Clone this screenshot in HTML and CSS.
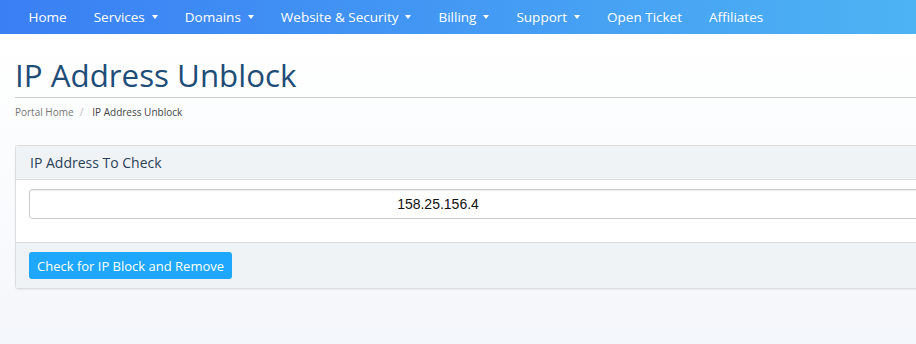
FILE: index.html
```html
<!DOCTYPE html>
<html lang="en">
<head>
    <meta charset="UTF-8">
    <meta name="viewport" content="width=device-width, initial-scale=1.0">
    <title>IP Address Unblock</title>
    <link rel="stylesheet" href="styles.css">
</head>
<body>
    <nav class="main-nav">
        <a href="#" class="nav-link">Home</a>
        <a href="#" class="nav-link">Services<span class="caret"></span></a>
        <a href="#" class="nav-link">Domains<span class="caret"></span></a>
        <a href="#" class="nav-link">Website &amp; Security<span class="caret"></span></a>
        <a href="#" class="nav-link">Billing<span class="caret"></span></a>
        <a href="#" class="nav-link">Support<span class="caret"></span></a>
        <a href="#" class="nav-link">Open Ticket</a>
        <a href="#" class="nav-link">Affiliates</a>
    </nav>

    <main class="page">
        <div class="header-lined">
            <h1>IP Address Unblock</h1>
        </div>
        <ol class="breadcrumb">
            <li><a href="#">Portal Home</a></li>
            <li class="active">IP Address Unblock</li>
        </ol>

        <div class="panel">
            <div class="panel-heading">IP Address To Check</div>
            <div class="panel-body">
                <input type="text" class="ip-input" value="158.25.156.4">
            </div>
            <div class="panel-footer">
                <button class="check-btn">Check for IP Block and Remove</button>
            </div>
        </div>
    </main>
</body>
</html>
```

FILE: styles.css
```css
body {
    margin: 0;
    font-family: "Open Sans", sans-serif;
    background: linear-gradient(to bottom, #ffffff 40px, #f4f7fb 344px);
    min-height: 100vh;
    overflow: hidden;
}
.main-nav {
    display: flex;
    align-items: center;
    height: 34px;
    padding-left: 15px;
    background: linear-gradient(to right, #3a7ff4, #4db3f3);
}
.nav-link {
    display: flex;
    align-items: center;
    padding: 0 13.5px;
    color: #fff;
    font-size: 13.5px;
    text-decoration: none;
    white-space: nowrap;
}
.caret {
    width: 0;
    height: 0;
    margin-left: 7px;
    border-left: 3.5px solid transparent;
    border-right: 3.5px solid transparent;
    border-top: 4px solid #fff;
}
.page {
    padding: 0 0 0 15px;
    width: 1100px;
}
.header-lined {
    border-bottom: 1px solid #cccccc;
    padding: 23px 0 4px;
}
.header-lined h1 {
    margin: 0;
    font-size: 31.3px;
    font-weight: 400;
    line-height: 36px;
    color: #1e4d78;
}
.breadcrumb {
    display: flex;
    list-style: none;
    margin: 0;
    padding: 6px 0 0;
    font-size: 10px;
    line-height: 16px;
}
.breadcrumb a {
    color: #777;
    text-decoration: none;
}
.breadcrumb .active {
    color: #444;
}
.breadcrumb li + li::before {
    content: "/";
    color: #bbb;
    padding: 0 9px 0 6px;
}
.panel {
    margin-top: 25px;
    border: 1px solid #dddddd;
    border-radius: 3px;
    background: #fff;
    box-shadow: 0 1px 2px rgba(0, 0, 0, 0.05);
}
.panel-heading {
    background: #f0f3f6;
    border-bottom: 1px solid #dddddd;
    padding: 7px 14px;
    height: 19px;
    font-size: 14px;
    line-height: 19px;
    color: #2a4157;
}
.panel-body {
    padding: 9px 13px 23px;
}
.ip-input {
    display: block;
    box-sizing: border-box;
    width: 1100px;
    height: 30px;
    padding: 0 294px 0 12px;
    border: 1px solid #cccccc;
    border-radius: 3px;
    font-family: "Liberation Sans", Arial, sans-serif;
    font-size: 14px;
    color: #111;
    text-align: center;
    box-shadow: inset 0 1px 1px rgba(0, 0, 0, 0.075);
}
.panel-footer {
    background: #f0f3f6;
    border-top: 1px solid #dddddd;
    padding: 9px 13px 9px;
}
.check-btn {
    display: block;
    background: #1ea7fd;
    color: #fff;
    border: none;
    border-radius: 3px;
    padding: 0 8px;
    height: 27px;
    font-family: "Open Sans", sans-serif;
    font-size: 13px;
    cursor: pointer;
}
```
